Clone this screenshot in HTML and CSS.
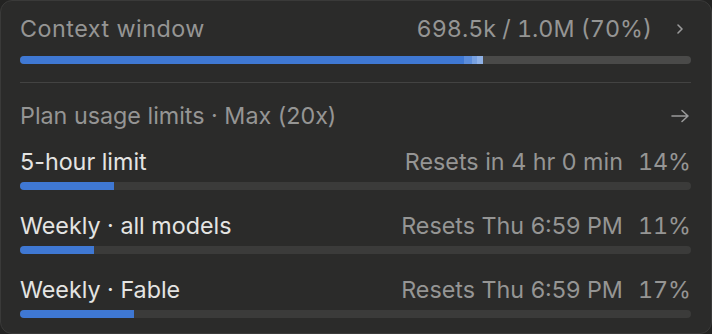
FILE: index.html
```html
<!DOCTYPE html>
<html>
<head>
<meta charset="utf-8">
<link rel="stylesheet" href="styles.css">
</head>
<body>
<div class="panel">
  <div class="row header">
    <span class="label muted wide">Context window</span>
    <span class="right">
      <span class="muted num">698.5k / 1.0M (70%)</span>
      <svg class="chev" width="8" height="12" viewBox="0 0 8 12"><polyline points="2,2 6,6 2,10" fill="none" stroke="#9a9a9a" stroke-width="1.6" stroke-linecap="round" stroke-linejoin="round"/></svg>
    </span>
  </div>
  <div class="bar ctx">
    <div class="seg s1" style="width:444px"></div>
    <div class="seg s2" style="width:8px"></div>
    <div class="seg s3" style="width:5px"></div>
    <div class="seg s4" style="width:6px"></div>
  </div>
  <div class="divider"></div>
  <div class="row plan">
    <span class="label muted">Plan usage limits · Max (20x)</span>
    <svg class="arrow" width="20" height="14" viewBox="0 0 20 14"><path d="M2 7 H18 M12 1.5 L18 7 L12 12.5" fill="none" stroke="#9a9a9a" stroke-width="1.6" stroke-linecap="round" stroke-linejoin="round"/></svg>
  </div>
  <div class="limit">
    <div class="row">
      <span class="label bright">5-hour limit</span>
      <span class="right muted"><span>Resets in 4 hr 0 min</span><span class="pct num">14%</span></span>
    </div>
    <div class="bar"><div class="seg s1" style="width:94px"></div></div>
  </div>
  <div class="limit">
    <div class="row">
      <span class="label bright">Weekly · all models</span>
      <span class="right muted"><span>Resets Thu 6:59 PM</span><span class="pct num">11%</span></span>
    </div>
    <div class="bar"><div class="seg s1" style="width:74px"></div></div>
  </div>
  <div class="limit">
    <div class="row">
      <span class="label bright">Weekly · Fable</span>
      <span class="right muted"><span>Resets Thu 6:59 PM</span><span class="pct num">17%</span></span>
    </div>
    <div class="bar"><div class="seg s1" style="width:114px"></div></div>
  </div>
</div>
</body>
</html>
```
FILE: styles.css
```css
* { box-sizing: border-box; }
html, body { margin: 0; padding: 0; background: #232322; }
body { width: 712px; height: 334px; overflow: hidden; }
.panel {
  width: 712px;
  height: 334px;
  background: #2b2b2a;
  border: 1px solid #3a3a39;
  border-radius: 12px;
  padding: 14px 20px 0 19px;
  display: flex;
  flex-direction: column;
  font-family: Inter, "Noto Sans", sans-serif;
  font-size: 23.3px;
  line-height: 28px;
}
.row {
  display: flex;
  justify-content: space-between;
  align-items: center;
  height: 28px;
  white-space: nowrap;
}
.muted { color: #959594; }
.bright { color: #e4e4e2; }
.wide { letter-spacing: 0.5px; }
.num { font-variant-numeric: tabular-nums; }
.right { display: flex; align-items: center; }
.chev { margin-left: 24px; margin-right: 7px; }
.pct { margin-left: 15px; }
.bar {
  height: 8px;
  width: 671px;
  background: #3b3b3a;
  border-radius: 4px;
  overflow: hidden;
  display: flex;
  margin-top: 6px;
}
.bar.ctx { background: #4a4a49; margin-top: 13px; }
.seg { height: 100%; }
.s1 { background: #3f78d3; }
.s2 { background: #5b8cda; }
.s3 { background: #77a0e0; }
.s4 { background: #8fb1e6; }
.divider { height: 1px; width: 671px; background: #434342; margin-top: 18px; }
.plan { margin-top: 19px; }
.arrow { margin-right: 1px; }
.limit { margin-top: 18px; }
.limit + .limit { margin-top: 22px; }
```
